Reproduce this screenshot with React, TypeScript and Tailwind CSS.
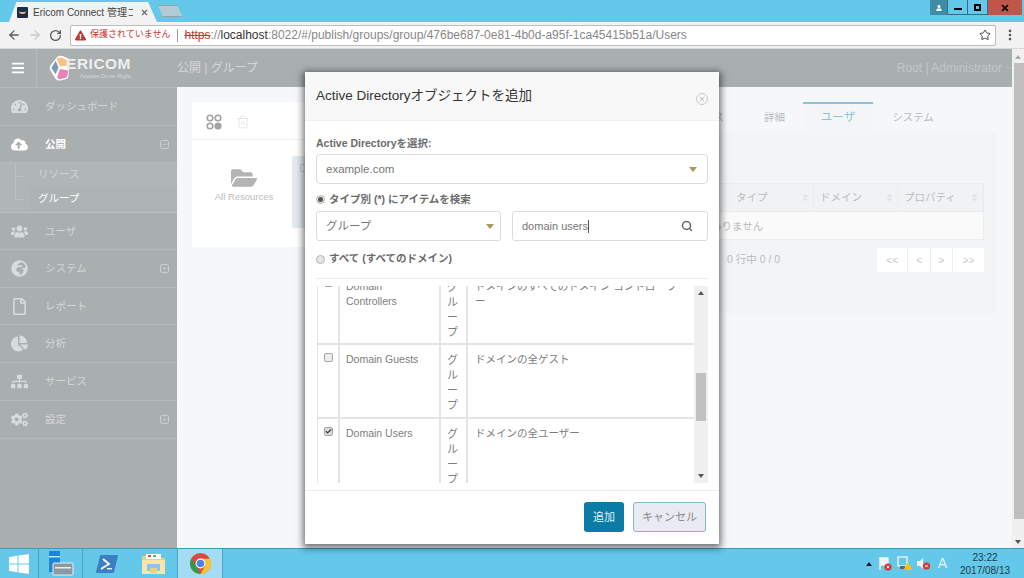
import React from "react";
import { ArrowLeft, ArrowRight, RotateCw, Star, EllipsisVertical, Trash2, Search, ChevronDown, X, Minus, Plus, Check } from "lucide-react";
import { FaTachometerAlt, FaCloudUploadAlt, FaUsers, FaGlobeAfrica, FaRegFile, FaChartPie, FaSitemap, FaCogs, FaFolderOpen, FaSort, FaExclamationTriangle, FaUser, FaBars } from "react-icons/fa";

const font = "font-['Liberation_Sans','Noto_Sans_CJK_JP',sans-serif]";

const ToggleBox = ({ minus }: { minus?: boolean }) => (
  <span className="w-[9px] h-[9px] border border-[#c9cdcd] rounded-[2px] flex items-center justify-center">
    {minus ? <Minus size={7} className="text-[#c9cdcd]" /> : <Plus size={7} className="text-[#c9cdcd]" />}
  </span>
);

const NavItem = ({ icon, label, bold, toggle, h }: { icon: React.ReactNode; label: string; bold?: boolean; toggle?: "plus" | "minus"; h: string }) => (
  <div className={`${h} flex items-center border-b border-[#b5baba] shrink-0`}>
    <span className={`w-[38px] flex justify-center text-[17px] ${bold ? "text-white" : "text-[#d9dcdc]"}`}>{icon}</span>
    <span className={`ml-[7px] pt-[1px] text-[10.5px] flex-1 ${bold ? "text-white font-bold" : "text-[#d4d7d7]"}`}>{label}</span>
    {toggle && <span className="pr-[8px]"><ToggleBox minus={toggle === "minus"} /></span>}
  </div>
);

const Sidebar = () => (
  <div className="w-[177px] shrink-0 bg-[#a9aeaf] flex flex-col border-t border-[#b5baba]">
    <NavItem h="h-[38px]" icon={<FaTachometerAlt />} label="ダッシュボード" />
    <NavItem h="h-[37px]" icon={<FaCloudUploadAlt />} label="公開" bold toggle="minus" />
    <div className="h-[50px] bg-[#b0b5b5] border-b border-[#bcc0c0] flex shrink-0">
      <div className="w-[30px] relative">
        <div className="absolute left-[15px] top-0 h-[36px] w-px bg-[#bcc0c0]" />
        <div className="absolute left-[15px] top-[13px] h-px w-[10px] bg-[#bcc0c0]" />
        <div className="absolute left-[15px] top-[36px] h-px w-[10px] bg-[#bcc0c0]" />
      </div>
      <div className="flex-1 flex flex-col">
        <div className="h-[24px] flex items-center pl-[8px] text-[10.5px] text-[#d4d7d7]">リソース</div>
        <div className="h-[24px] flex items-center pl-[8px] text-[10.5px] text-white bg-[#adb2b2]">グループ</div>
      </div>
    </div>
    <NavItem h="h-[37px]" icon={<FaUsers />} label="ユーザ" />
    <NavItem h="h-[38px]" icon={<FaGlobeAfrica />} label="システム" toggle="plus" />
    <NavItem h="h-[37px]" icon={<FaRegFile />} label="レポート" />
    <NavItem h="h-[38px]" icon={<FaChartPie />} label="分析" />
    <NavItem h="h-[38px]" icon={<FaSitemap />} label="サービス" />
    <NavItem h="h-[38px]" icon={<FaCogs />} label="設定" toggle="plus" />
  </div>
);

const FourCircles = () => (
  <svg width="16" height="16" viewBox="0 0 16 16" fill="none" stroke="#a3a3a3" strokeWidth="1.6">
    <circle cx="4" cy="4" r="2.8" />
    <circle cx="12" cy="4" r="2.8" />
    <circle cx="4" cy="12" r="2.8" />
    <circle cx="12" cy="12" r="2.8" fill="#a3a3a3" />
  </svg>
);

const ColHead = ({ w, label }: { w: string; label: string }) => (
  <div className={`${w} h-full flex items-center justify-between pl-[6px] pr-[3px] border-r border-[#ebecee] text-[10.5px] text-[#b9bbbd]`}>
    {label}
    <FaSort size={9} className="text-[#e2e3e5]" />
  </div>
);

const Background = () => (
  <div className="flex-1 bg-[#f6f7f9] flex pl-[15px] pt-[15px] min-w-0">
    <div className="w-[400px] h-[145px] bg-white shrink-0">
      <div className="h-[38px] border-b border-[#eff0f1] flex items-center gap-[14px] pl-[14px] pt-[3px]">
        <FourCircles />
        <Trash2 size={14} strokeWidth={1.2} className="text-[#dcdcdc]" />
      </div>
      <div className="flex pt-[16px]">
        <div className="w-[100px] flex flex-col items-center pt-[9px] pl-[4px]">
          <FaFolderOpen size={26} className="text-[#b4b4b4]" />
          <span className="text-[9.5px] text-[#bcbcbc] -mt-[1px]">All Resources</span>
        </div>
        <div className="w-[60px] h-[72px] bg-[#e3e9ee] rounded-[2px] pl-[8px] pt-[8px]">
          <div className="w-[6px] h-[8px] border border-[#c9cdd0] rounded-[1px]" />
        </div>
      </div>
    </div>
    <div className="w-[404px] flex flex-col">
      <div className="h-[29px] flex text-[10.5px] text-[#b9bbbd] shrink-0">
        <div className="w-[150px] flex items-center justify-end pr-[18px] pt-[2px]">リソース</div>
        <div className="w-[61px] flex items-center justify-end pr-[18px] pt-[2px]">詳細</div>
        <div className="w-[70px] flex items-center justify-center text-[11.5px] text-[#88c3da] border-t-2 border-[#88c3da] bg-[#f4f5f7]">ユーザ</div>
        <div className="w-[80px] flex items-center justify-center pt-[2px]">システム</div>
      </div>
      <div className="bg-[#f3f4f6] h-[182px] px-[12px] pt-[52px] shrink-0">
        <div className="border border-[#ebecee] bg-[#f1f2f4] h-[29px] flex justify-end">
          <div className="w-[84px] h-full" />
          <ColHead w="w-[84px]" label="タイプ" />
          <ColHead w="w-[84px]" label="ドメイン" />
          <ColHead w="w-[85px]" label="プロパティ" />
        </div>
        <div className="h-[28px] bg-[#fafafa] border-b border-x border-[#ebecee] flex items-center pl-[64px] pt-[2px] text-[10.5px] text-[#b9bbbd]">データがありません</div>
        <div className="flex items-center justify-between mt-[8px] h-[24px]">
          <span className="text-[10.5px] text-[#b9bbbd] pl-[123px]">0 行中 0 / 0</span>
          <div className="flex bg-white h-[24px] text-[10px] text-[#c5c7c9] rounded-[2px]">
            <span className="w-[31px] flex items-center justify-center border-r border-[#eceded]">&lt;&lt;</span>
            <span className="w-[23px] flex items-center justify-center border-r border-[#eceded]">&lt;</span>
            <span className="w-[22px] flex items-center justify-center border-r border-[#eceded]">&gt;</span>
            <span className="w-[31px] flex items-center justify-center">&gt;&gt;</span>
          </div>
        </div>
      </div>
    </div>
  </div>
);

const Caret = () => <span className="w-0 h-0 border-x-[4px] border-x-transparent border-t-[5px] border-t-[#a6985f]" />;

const rows = [
  { name: "Domain Controllers", desc: "ドメインのすべてのドメイン コントローラー", h: "h-[75px]", nameTop: "pt-[9px]", typeTop: "pt-[10px]", box: false },
  { name: "Domain Guests", desc: "ドメインの全ゲスト", h: "h-[74px]", nameTop: "pt-[7px]", typeTop: "pt-[8px]", box: false },
  { name: "Domain Users", desc: "ドメインの全ユーザー", h: "h-[74px]", nameTop: "pt-[7px]", typeTop: "pt-[8px]", box: true },
];

const ObjectTable = () => (
  <div className="mt-[7px] h-[197px] flex overflow-hidden">
    <div className="flex-1 min-w-0 overflow-hidden">
      <div className="-mt-[16px] ml-[1px] border-l border-[#e4e4e4]">
        {rows.map((r) => (
          <div key={r.name} className={`${r.h} flex border-b-2 border-[#e4e4e4] text-[10.5px] leading-[15px] text-[#7d7d7d]`}>
            <div className="w-[22px] border-r-2 border-[#e4e4e4] flex justify-center pt-[8px] shrink-0">
              <span className={`w-[9px] h-[9px] border border-[#a5a5a5] rounded-[2px] flex items-center justify-center ${r.box ? "bg-[#dcdcdc]" : "bg-[#ededed]"}`}>
                {r.box && <Check size={9} strokeWidth={4} className="text-[#333]" />}
              </span>
            </div>
            <div className={`w-[101px] border-r-2 border-[#e4e4e4] pl-[6px] pr-[12px] ${r.nameTop} shrink-0`}>{r.name}</div>
            <div className={`w-[27px] border-r-2 border-[#e4e4e4] pl-[6px] ${r.typeTop} shrink-0 text-[11px]`}>グループ</div>
            <div className={`flex-1 pl-[7px] pr-[12px] ${r.nameTop}`}>{r.desc}</div>
          </div>
        ))}
      </div>
    </div>
    <div className="w-[14px] bg-[#f0f0f0] flex flex-col items-center justify-between py-[5px] shrink-0 relative">
      <span className="w-0 h-0 border-x-[3px] border-x-transparent border-b-[4px] border-b-[#555]" />
      <div className="absolute top-[87px] left-[2px] w-[10px] h-[48px] bg-[#c1c1c1]" />
      <span className="w-0 h-0 border-x-[3px] border-x-transparent border-t-[4px] border-t-[#555]" />
    </div>
  </div>
);

const Radio = ({ on }: { on?: boolean }) => (
  <span className="w-[9px] h-[9px] rounded-full border border-[#b5b5b5] bg-[#e6e6e6] flex items-center justify-center">
    {on && <span className="w-[5px] h-[5px] rounded-full bg-[#555]" />}
  </span>
);

const Modal = () => (
  <div className="absolute left-[305px] top-[72px] w-[414px] h-[472px] bg-white flex flex-col shadow-[0_2px_7px_2px_rgba(0,0,0,0.55)]">
    <div className="h-[49px] bg-[#f8f8f8] border-b border-[#efefef] flex items-center justify-between px-[11px] shrink-0">
      <span className="text-[13.5px] text-[#333]">Active Directoryオブジェクトを追加</span>
      <span className="w-[12px] h-[12px] rounded-full border border-[#c9c9c9] flex items-center justify-center mt-[6px]">
        <X size={8} strokeWidth={3} className="text-[#bdbdbd]" />
      </span>
    </div>
    <div className="px-[11px] flex-1 flex flex-col min-h-0">
      <div className="mt-[14px] h-[16px] text-[10.5px] font-bold text-[#6b6b6b] leading-[16px]">Active Directoryを選択:</div>
      <div className="mt-[3px] h-[30px] border border-[#dcdcdc] rounded-[4px] flex items-center justify-between pl-[9px] pr-[10px] text-[11.5px] text-[#777]">
        <span className="pt-[2px]">example.com</span>
        <Caret />
      </div>
      <div className="mt-[7px] h-[16px] pt-[1px] flex items-center gap-[4px] text-[10.5px] font-bold text-[#6b6b6b]">
        <Radio on />
        タイプ別 (*) にアイテムを検索
      </div>
      <div className="mt-[4px] flex gap-[11px] h-[30px]">
        <div className="w-[185px] border border-[#dcdcdc] rounded-[3px] flex items-center justify-between pl-[9px] pr-[6px] text-[11.5px] text-[#777]">
          <span className="pt-[2px]">グループ</span>
          <Caret />
        </div>
        <div className="flex-1 border border-[#dcdcdc] rounded-[3px] flex items-center justify-between pl-[9px] pr-[14px] text-[11px] text-[#777]">
          <span className="border-r border-[#555] leading-[13px]">domain users</span>
          <Search size={12} strokeWidth={3} className="text-[#666]" />
        </div>
      </div>
      <div className="mt-[10px] h-[16px] flex items-center gap-[4px] text-[10.5px] font-bold text-[#6b6b6b]">
        <Radio />
        すべて (すべてのドメイン)
      </div>
      <div className="mt-[11px] border-t border-[#ececec]" />
      <ObjectTable />
    </div>
    <div className="h-[54px] border-t border-[#ececec] flex items-start justify-end gap-[9px] pt-[11px] pr-[13px] shrink-0">
      <button className="w-[40px] h-[30px] bg-[#0a7ca6] text-[#e2f0f5] text-[11px] rounded-[3px]">追加</button>
      <button className="w-[73px] h-[30px] bg-[#e9ebf2] border border-[#82b6cf] text-[#8a8a8a] text-[11px] rounded-[3px]">キャンセル</button>
    </div>
  </div>
);

const ChromeLogo = ({ size }: { size: number }) => (
  <svg width={size} height={size} viewBox="0 0 24 24">
    <circle cx="12" cy="12" r="11" fill="#dd4b3e" />
    <path d="M2.5 6.5 8 16l4 7a11 11 0 0 1-9.5-16.5z" fill="#2d9e4a" />
    <path d="M12 7h10a11 11 0 0 1-10 16l5-9z" fill="#f6c433" />
    <circle cx="12" cy="12" r="5.2" fill="#fff" />
    <circle cx="12" cy="12" r="4" fill="#4a86e8" />
  </svg>
);

const Titlebar = () => (
  <div className="h-[22px] bg-[#63c8ea] flex items-end relative shrink-0">
    <div className="ml-[9px] w-[148px] h-[20px] bg-[#f2f2f2] [clip-path:polygon(0_100%,5%_0,94%_0,100%_100%)] flex items-center pl-[8px] gap-[5px]">
      <span className="w-[11px] h-[11px] bg-[#1d2c4c] rounded-[1px] flex items-center justify-center shrink-0">
        <span className="w-[7px] h-[4px] border-b-2 border-[#e9c27b] rounded-b-full" />
      </span>
      <span className="w-[100px] overflow-hidden whitespace-nowrap text-[10px] text-[#444]">Ericom Connect 管理コンソール</span>
      <X size={9} strokeWidth={3} className="text-[#666] ml-[2px]" />
    </div>
    <div className="ml-[1px] mb-[5px] w-[25px] h-[12px] bg-[#b3cbd5] border border-[#8aa5b0] [clip-path:polygon(0_0,75%_0,100%_100%,20%_100%)]" />
    <div className="absolute right-[2px] top-0 flex h-[15px]">
      <div className="w-[17px] bg-[#3f8ca6] flex items-center justify-center"><FaUser size={6} className="text-white" /></div>
      <div className="w-[21px] border border-t-0 border-[#2f6e85] flex items-center justify-center"><span className="w-[8px] h-[2px] bg-black mt-[3px]" /></div>
      <div className="w-[20px] border border-t-0 border-l-0 border-[#2f6e85] flex items-center justify-center"><span className="w-[7px] h-[7px] border-2 border-black" /></div>
      <div className="w-[34px] bg-[#c0554c] flex items-center justify-center"><X size={10} strokeWidth={4} className="text-black" /></div>
    </div>
  </div>
);

const Toolbar = () => (
  <div className="h-[27px] bg-[#f2f2f2] flex items-center shrink-0 border-b border-[#d8d8d8]">
    <div className="w-[70px] flex items-center pl-[7px] gap-[7px]">
      <ArrowLeft size={14} strokeWidth={2.2} className="text-[#5a5a5a]" />
      <ArrowRight size={14} strokeWidth={2.2} className="text-[#c8c8c8]" />
      <RotateCw size={13} strokeWidth={2.4} className="text-[#5a5a5a]" />
    </div>
    <div className="w-[926px] h-[21px] bg-white border border-[#bdbdbd] rounded-[2px] flex items-center pl-[4px] pr-[3px] text-[12px] whitespace-nowrap">
      <FaExclamationTriangle size={11} className="text-[#c5372c]" />
      <span className="text-[#c5372c] ml-[4px] text-[9px]">保護されていません</span>
      <span className="w-px h-[13px] bg-[#999] ml-[7px] mr-[6px]" />
      <span className="text-[#c5372c] line-through">https</span>
      <span className="text-[#888]">://</span>
      <span className="text-[#333]">localhost</span>
      <span className="text-[#888]">:8022/#/publish/groups/group/476be687-0e81-4b0d-a95f-1ca45415b51a/Users</span>
      <Star size={12} strokeWidth={2} className="ml-auto mr-[1px] text-[#444]" />
    </div>
    <div className="flex-1 flex justify-center"><EllipsisVertical size={14} strokeWidth={2.5} className="text-[#555]" /></div>
  </div>
);

const Logo = () => (
  <div className="flex items-center ml-[12px]">
    <svg width="21" height="26" viewBox="0 0 22 27" className="shrink-0">
      <path d="M9 1.5 Q11 0 14 1 L19 3 Q22 4 21 7 L20.5 21 Q20.5 24 18 25 L12 26.5 Q9 27 7 25 L1.5 16 Q0 13.5 1.5 11 Z" fill="#fff" />
      <path d="M8 4 Q10 2 13 2.5 L18 4.5 Q20 5.5 20 8 L20 11 L11.5 12 Z" fill="#f6c387" />
      <path d="M11.5 14.5 L20 16 L19.5 21 Q19 23.5 17 24 L12 25 Q10 25.5 8.5 23.5 Z" fill="#e783b6" />
      <path d="M7 6 L10 13 L7 20 L2.5 13.5 Z" fill="#7b9ab3" />
    </svg>
    <div className="flex flex-col items-end ml-[2px] leading-none">
      <span className="text-[14px] font-bold text-[#eef0f0] tracking-[0.5px] font-['Liberation_Sans',sans-serif] scale-x-110 origin-right">ERICOM</span>
      <span className="text-[6px] text-[#d6d9d9] mt-[2px] whitespace-nowrap">Access Done Right</span>
    </div>
  </div>
);

const AppHeader = () => (
  <div className="h-[38px] bg-[#a9aeaf] flex items-center shrink-0">
    <div className="w-[37px] h-full border-r border-[#b5baba] flex items-center justify-center">
      <FaBars size={14} className="text-white" />
    </div>
    <Logo />
    <span className="ml-[46px] text-[12px] text-[#d4d7d7]">公開 | グループ</span>
    <span className="ml-auto text-[12px] text-[#c4c8c8]">Root | Administrator</span>
    <ChevronDown size={8} className="text-[#c4c8c8] ml-[3px] mr-[-1px]" />
  </div>
);

const PageScrollbar = () => (
  <div className="w-[12px] bg-[#f0f0f0] shrink-0 flex flex-col items-center">
    <span className="mt-[6px] w-0 h-0 border-x-[3px] border-x-transparent border-b-[4px] border-b-[#aaa]" />
    <div className="mt-[4px] w-[10px] h-[456px] bg-[#bfbfbf] ml-[1px]" />
    <span className="mt-[21px] w-0 h-0 border-x-[3px] border-x-transparent border-t-[4px] border-t-[#555]" />
  </div>
);

const Taskbar = () => (
  <div className="h-[30px] bg-[#63c8ea] border-t border-[#3f9ab8] flex items-stretch shrink-0 text-[#1c3b48]">
    <div className="w-[39px] flex items-center justify-center border-r border-[#4aa3c0]">
      <svg width="20" height="20" viewBox="0 0 20 20" fill="#fff">
        <path d="M0 3 L8.5 1.8 V9.5 H0 Z M9.5 1.6 L20 0 V9.5 H9.5 Z M0 10.5 H8.5 V18.2 L0 17 Z M9.5 10.5 H20 V20 L9.5 18.4 Z" />
      </svg>
    </div>
    <div className="w-[44px] flex items-center justify-center border-r border-[#4aa3c0]">
      <svg width="26" height="25" viewBox="0 0 26 25">
        <rect x="1" y="0" width="11" height="21" fill="#1d84d6" />
        <rect x="1" y="5" width="11" height="1.5" fill="#bfe2f7" />
        <rect x="5" y="12" width="20" height="12" rx="1" fill="#8b99a3" stroke="#e8eef1" />
        <rect x="7" y="16" width="16" height="1.5" fill="#e8eef1" />
      </svg>
    </div>
    <div className="w-[47px] flex items-center justify-center">
      <svg width="22" height="20" viewBox="0 0 22 20">
        <path d="M5 1 H21 Q22 1 22 2 L18 18 Q18 19 16 19 H1 Q0 19 0 18 L4 2 Q4 1 5 1 Z" fill="#3b7fc1" />
        <path d="M7 5 L13 10 L5 15" fill="none" stroke="#fff" strokeWidth="1.8" />
        <rect x="11" y="14" width="5" height="1.4" fill="#fff" />
      </svg>
    </div>
    <div className="w-[48px] flex items-center justify-center border-r border-[#4aa3c0]">
      <svg width="25" height="22" viewBox="0 0 25 22">
        <path d="M1 3 H9 L11 5 H24 V21 H1 Z" fill="#f0cf7a" />
        <rect x="5" y="1" width="15" height="5" fill="#fff" />
        <rect x="7" y="2" width="3" height="2" fill="#d9534f" />
        <rect x="12" y="2" width="3" height="2" fill="#5cb85c" />
        <rect x="1" y="7" width="23" height="14" fill="#fbe6a6" />
        <rect x="6" y="11" width="13" height="7" fill="#8cc6ea" />
        <rect x="9" y="15" width="7" height="5" fill="#f0cf7a" />
      </svg>
    </div>
    <div className="w-[45px] bg-[#a3dcf3] flex items-center justify-center border-r border-[#4aa3c0]">
      <ChromeLogo size={23} />
    </div>
    <div className="ml-auto flex items-center">
      <span className="w-0 h-0 border-x-[3px] border-x-transparent border-b-[4px] border-b-[#222] mr-[6px]" />
      <svg width="15" height="15" viewBox="0 0 15 15" className="mr-[4px]">
        <path d="M2 1 V14 M2 2 H10 V9 H2" stroke="#f2f2f2" strokeWidth="1.4" fill="#eef3f6" />
        <circle cx="10" cy="11" r="3.6" fill="#d8302f" />
        <path d="M8.7 9.7 L11.3 12.3 M11.3 9.7 L8.7 12.3" stroke="#fff" strokeWidth="1" />
      </svg>
      <svg width="16" height="15" viewBox="0 0 16 15" className="mr-[3px]">
        <rect x="1" y="1" width="9" height="9" fill="none" stroke="#e8eef1" strokeWidth="1.5" />
        <rect x="3" y="10" width="5" height="3" fill="#5c6b72" />
        <path d="M11 6 L15.5 14 H6.5 Z" fill="#f2c21a" />
      </svg>
      <svg width="15" height="15" viewBox="0 0 15 15" className="mr-[7px]">
        <path d="M1 5 H4 L7 2 V13 L4 10 H1 Z" fill="#eef3f6" />
        <circle cx="10.5" cy="10" r="3.6" fill="#d8302f" />
        <path d="M9.2 8.7 L11.8 11.3 M11.8 8.7 L9.2 11.3" stroke="#fff" strokeWidth="1" />
      </svg>
      <span className="text-[14px] text-[#e8f4f8] mr-[8px] font-['Liberation_Sans',sans-serif]">A</span>
      <div className="w-[60px] flex flex-col items-center text-[10px] leading-[13px] mr-[9px]">
        <span>23:22</span>
        <span>2017/08/13</span>
      </div>
    </div>
  </div>
);

export default function App() {
  return (
    <div className={`w-[1024px] h-[578px] overflow-hidden relative flex flex-col ${font}`}>
      <Titlebar />
      <Toolbar />
      <div className="flex-1 flex min-h-0">
        <div className="flex-1 flex flex-col min-w-0">
          <AppHeader />
          <div className="flex-1 flex min-h-0">
            <Sidebar />
            <Background />
          </div>
        </div>
        <PageScrollbar />
      </div>
      <Taskbar />
      <Modal />
    </div>
  );
}
